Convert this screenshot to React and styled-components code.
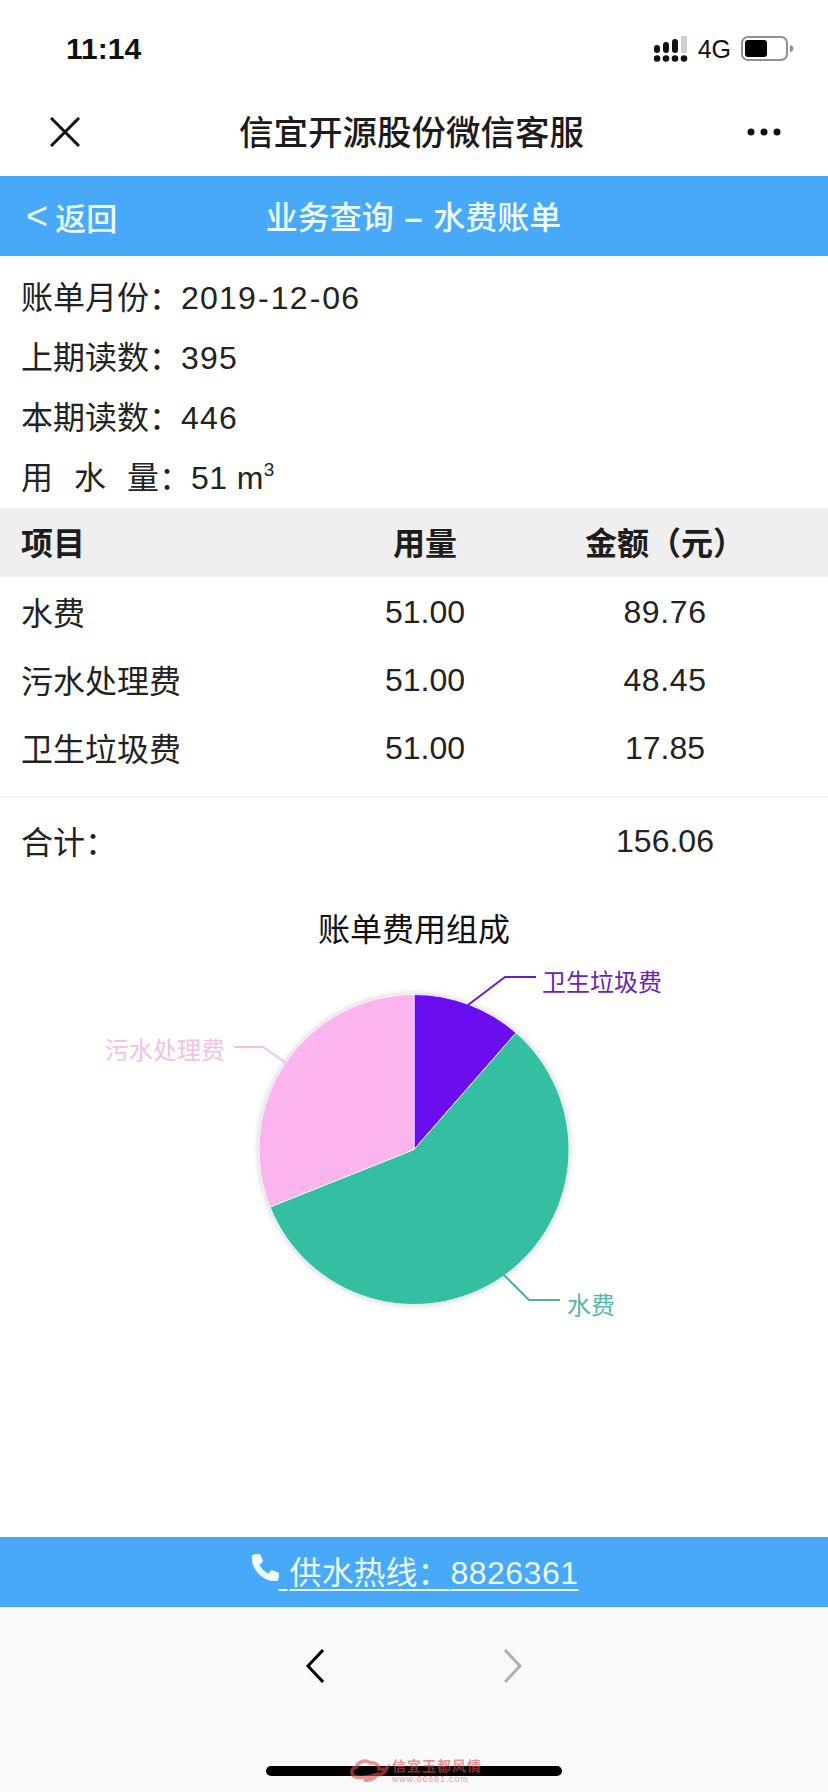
// App.jsx
import React from 'react';
import styled, { createGlobalStyle } from 'styled-components';
import { FaPhoneAlt } from 'react-icons/fa';

const GlobalStyle = createGlobalStyle`
  html, body {
    margin: 0;
    padding: 0;
    background: #fff;
  }
  body {
    font-family: 'Liberation Sans', 'Noto Sans CJK SC', sans-serif;
    color: #222;
  }
`;

const Page = styled.div`
  width: 828px;
  height: 1792px;
  display: flex;
  flex-direction: column;
  background: #fff;
  overflow: hidden;
`;

const StatusBar = styled.div`
  height: 88px;
  display: flex;
  align-items: center;
  justify-content: space-between;
  padding: 22px 34px 12px 66px;
  box-sizing: border-box;
`;

const Clock = styled.div`
  font-size: 30px;
  font-weight: 700;
  color: #111;
`;

const StatusRight = styled.div`
  display: flex;
  align-items: center;
  gap: 10px;
`;

const NetworkLabel = styled.span`
  font-size: 25px;
  color: #111;
`;

const NavBar = styled.div`
  height: 88px;
  display: flex;
  align-items: center;
  justify-content: space-between;
  padding: 0 47px 0 50px;
`;

const NavTitle = styled.div`
  font-size: 34.5px;
  font-weight: 500;
  color: #1c1c1c;
  margin: -4px 0 0 -4px;
`;

const BlueBar = styled.div`
  height: ${(p) => p.$height}px;
  flex-shrink: 0;
  background: #47a9f7;
  color: #ecfbff;
  font-size: 32px;
  display: flex;
  align-items: center;
  justify-content: center;
`;

const Header = styled(BlueBar)`
  position: relative;
`;

const BackLink = styled.div`
  position: absolute;
  left: 26px;
  top: 0;
  height: 100%;
  display: flex;
  align-items: center;
  gap: 7px;
  font-size: 31px;
  font-weight: 500;
`;

const BackArrow = styled.span`
  font-size: 38px;
  line-height: 1;
`;

const HeaderTitle = styled.div`
  font-weight: 500;
  word-spacing: 2px;
  margin: -2px 0 0 -1px;
`;

const Dash = styled.span`
  font-weight: 700;
`;

const InfoList = styled.div`
  padding: 12px 21px 0;
`;

const InfoRow = styled.div`
  height: 60px;
  line-height: 60px;
  font-size: 32px;
  white-space: pre;
`;

const InfoValue = styled.span`
  letter-spacing: ${(p) => p.$spacing}px;
`;

const Hyphen = styled.span`
  letter-spacing: 0;
  margin: 0 2px 0 1px;
`;

const Sup = styled.sup`
  font-size: 19px;
  line-height: 0;
  vertical-align: 13px;
`;

const SpacedChar = styled.span`
  margin-right: 21px;
`;

const TableRow = styled.div`
  display: grid;
  grid-template-columns: 284px 240px 240px;
  align-items: center;
  height: ${(p) => p.$height}px;
  padding: 0 21px;
  font-size: 32px;
`;

const TableHead = styled(TableRow)`
  background: #efefef;
  font-weight: 700;
  color: #1d1d1d;
  padding-bottom: 4px;
  box-sizing: border-box;
`;

const TableBody = styled.div`
  padding-bottom: 15px;
  border-bottom: 2px solid #f3f3f3;
`;

const Cell = styled.div`
  text-align: center;
`;

const NumCell = styled(Cell)`
  padding-top: 3px;
  letter-spacing: ${(p) => p.$spacing || 0}px;
`;

const ChartSection = styled.div`
  flex: 1;
  display: flex;
  flex-direction: column;
`;

const ChartTitle = styled.div`
  height: 48px;
  line-height: 48px;
  margin-top: 24px;
  text-align: center;
  font-size: 32px;
  color: #111;
`;

const PieLabel = styled.text`
  font-size: 24px;
  font-family: 'Liberation Sans', 'Noto Sans CJK SC', sans-serif;
`;

const PieGroup = styled.g`
  filter: drop-shadow(0 0 3px rgba(0, 0, 0, 0.22));
`;

const HotlineLink = styled.div`
  display: flex;
  align-items: center;
  white-space: pre;
  margin: -4px 0 0 2px;
  svg {
    margin-top: -6px;
    stroke: currentColor;
    stroke-width: 18px;
  }
`;

const HotlineText = styled.span`
  text-decoration: underline;
  text-decoration-thickness: 2px;
  text-underline-offset: 5px;
`;

const HotlineLead = styled.span`
  margin-left: 2px;
`;

const HotlineNumber = styled.span`
  margin-left: 1px;
  letter-spacing: 0.5px;
`;

const Toolbar = styled.div`
  flex: 1;
  position: relative;
  background: #f9f9fb;
  display: flex;
  flex-direction: column;
  align-items: center;
`;

const ToolbarButtons = styled.div`
  width: 216px;
  margin-top: 42px;
  display: flex;
  justify-content: space-between;
`;

const HomeBar = styled.div`
  position: absolute;
  left: 266px;
  bottom: 16px;
  width: 296px;
  height: 10px;
  border-radius: 5px;
  background: #000;
`;

const Watermark = styled.div`
  position: absolute;
  left: 350px;
  bottom: 8px;
  display: flex;
  align-items: center;
  gap: 2px;
  color: rgba(222, 80, 80, 0.6);
`;

const WatermarkText = styled.div`
  display: flex;
  flex-direction: column;
  font-size: 9px;
  line-height: 10px;
  letter-spacing: 0.8px;
`;

const WatermarkName = styled.span`
  font-family: 'Liberation Serif', 'Noto Sans CJK SC', serif;
  font-size: 14px;
  line-height: 15px;
  letter-spacing: 1px;
  font-weight: 700;
`;

const rows = [
  { name: '水费', usage: '51.00', amount: '89.76', spacing: 0.6 },
  { name: '污水处理费', usage: '51.00', amount: '48.45', spacing: 0.6 },
  { name: '卫生垃圾费', usage: '51.00', amount: '17.85', spacing: 0 },
];

// 饼图从 12 点方向顺时针画
const slices = [
  {
    name: '卫生垃圾费',
    value: 17.85,
    fill: '#6a0ef0',
    line: '468,51 505,23 536,23',
    lineColor: '#6a1bc4',
    textColor: '#6c22b4',
    x: 542,
    y: 37,
  },
  {
    name: '水费',
    value: 89.76,
    fill: '#34bfa3',
    line: '504,321 529,346 560,346',
    lineColor: '#4fae9c',
    textColor: '#55b8a5',
    x: 567,
    y: 360,
  },
  {
    name: '污水处理费',
    value: 48.45,
    fill: '#fbb4ee',
    line: '286,109 263,93 234,93',
    lineColor: '#f3bfe9',
    textColor: '#f2bfe9',
    x: 225,
    y: 105,
    anchor: 'end',
  },
];

const CX = 414;
const CY = 195.5;
const R = 155;

const pointAt = (angle) => [
  CX + R * Math.sin(angle),
  CY - R * Math.cos(angle),
];

const PieChart = () => {
  const total = slices.reduce((sum, s) => sum + s.value, 0);
  let start = 0;
  const paths = slices.map((s) => {
    const sweep = (s.value / total) * Math.PI * 2;
    const [x1, y1] = pointAt(start);
    const [x2, y2] = pointAt(start + sweep);
    const large = sweep > Math.PI ? 1 : 0;
    start += sweep;
    return {
      name: s.name,
      fill: s.fill,
      d: `M${CX} ${CY}L${x1} ${y1}A${R} ${R} 0 ${large} 1 ${x2} ${y2}Z`,
    };
  });

  return (
    <svg width="828" height="583" viewBox="0 0 828 583">
      <PieGroup>
        {paths.map((p) => (
          <path key={p.name} d={p.d} fill={p.fill} stroke="#fff" strokeWidth="0.8" />
        ))}
      </PieGroup>
      {slices.map((s) => (
        <g key={s.name}>
          <polyline points={s.line} fill="none" stroke={s.lineColor} strokeWidth="2" />
          <PieLabel x={s.x} y={s.y} fill={s.textColor} textAnchor={s.anchor || 'start'}>
            {s.name}
          </PieLabel>
        </g>
      ))}
    </svg>
  );
};

const SignalIcon = () => (
  <svg width="34" height="27" viewBox="0 0 34 27">
    <g fill="#111">
      <rect x="0" y="9" width="6" height="8" rx="3" />
      <rect x="9" y="6" width="6" height="11" rx="3" />
      <rect x="18" y="3" width="6" height="14" rx="3" />
      <circle cx="3" cy="22.500" r="3.300" />
      <circle cx="12" cy="22.500" r="3.300" />
      <circle cx="21" cy="22.500" r="3.300" />
      <circle cx="30" cy="22.500" r="3.300" />
    </g>
    <rect x="27" y="0" width="6" height="17" rx="1" fill="#cfcfcf" />
  </svg>
);

const BatteryIcon = () => (
  <svg width="53" height="26" viewBox="0 0 53 26">
    <rect x="1" y="1" width="45" height="23" rx="6" fill="none" stroke="#8f8f8f" strokeWidth="2" />
    <rect x="4" y="4" width="22" height="17" rx="3" fill="#000" />
    <path d="M49 9c2.500 .6 3.500 2 3.500 3.500S51.500 15.400 49 16z" fill="#8f8f8f" />
  </svg>
);

const CloseIcon = () => (
  <svg width="30" height="30" viewBox="0 0 30 30">
    <path d="M1 1L29 29M29 1L1 29" stroke="#111" strokeWidth="3" fill="none" />
  </svg>
);

const MoreIcon = () => (
  <svg width="34" height="8" viewBox="0 0 34 8">
    <circle cx="4" cy="4" r="3.500" fill="#111" />
    <circle cx="17" cy="4" r="3.500" fill="#111" />
    <circle cx="30" cy="4" r="3.500" fill="#111" />
  </svg>
);

const Chevron = ({ dir, color }) => (
  <svg width="18" height="34" viewBox="0 0 18 34">
    <path
      d={dir === 'left' ? 'M17 1L2 17L17 33' : 'M1 1L16 17L1 33'}
      fill="none"
      stroke={color}
      strokeWidth="3"
    />
  </svg>
);

const CloudLogo = () => (
  <svg width="40" height="26" viewBox="0 0 40 26">
    <path
      d="M6 19c-5-1-6-8 0-10 2-5 9-8 14-4 5-1 9 2 9 6 3 0 5 1 8-1-2 5-6 7-10 7-3 4-8 6-13 5 5 0 9-2 11-5-6 2-14 3-19 2z"
      fill="none"
      stroke="rgba(222,80,80,0.6)"
      strokeWidth="3.500"
    />
  </svg>
);

const App = () => (
  <Page>
    <GlobalStyle />
    <StatusBar>
      <Clock>11:14</Clock>
      <StatusRight>
        <SignalIcon />
        <NetworkLabel>4G</NetworkLabel>
        <BatteryIcon />
      </StatusRight>
    </StatusBar>
    <NavBar>
      <CloseIcon />
      <NavTitle>信宜开源股份微信客服</NavTitle>
      <MoreIcon />
    </NavBar>
    <Header $height={80}>
      <BackLink>
        <BackArrow>&lt;</BackArrow>
        <span>返回</span>
      </BackLink>
      <HeaderTitle>业务查询 <Dash>–</Dash> 水费账单</HeaderTitle>
    </Header>
    <InfoList>
      <InfoRow>账单月份：<InfoValue $spacing={1.2}>2019<Hyphen>-</Hyphen>12<Hyphen>-</Hyphen>06</InfoValue></InfoRow>
      <InfoRow>上期读数：<InfoValue $spacing={1.2}>395</InfoValue></InfoRow>
      <InfoRow>本期读数：<InfoValue $spacing={1.2}>446</InfoValue></InfoRow>
      <InfoRow>
        <SpacedChar>用</SpacedChar>
        <SpacedChar>水</SpacedChar>
        量：<InfoValue $spacing={0.4}>51 m<Sup>3</Sup></InfoValue>
      </InfoRow>
    </InfoList>
    <TableHead $height={69}>
      <div>项目</div>
      <Cell>用量</Cell>
      <Cell>金额（元）</Cell>
    </TableHead>
    <TableBody>
      {rows.map((row) => (
        <TableRow key={row.name} $height={68}>
          <div>{row.name}</div>
          <NumCell>{row.usage}</NumCell>
          <NumCell $spacing={row.spacing}>{row.amount}</NumCell>
        </TableRow>
      ))}
    </TableBody>
    <TableRow $height={84}>
      <div>合计：</div>
      <div />
      <NumCell>156.06</NumCell>
    </TableRow>
    <ChartSection>
      <ChartTitle>账单费用组成</ChartTitle>
      <PieChart />
    </ChartSection>
    <BlueBar $height={70}>
      <HotlineLink>
        <FaPhoneAlt size={27} />
        <HotlineText> <HotlineLead>供水热线：</HotlineLead><HotlineNumber>8826361</HotlineNumber></HotlineText>
      </HotlineLink>
    </BlueBar>
    <Toolbar>
      <ToolbarButtons>
        <Chevron dir="left" color="#000" />
        <Chevron dir="right" color="#b0b0b0" />
      </ToolbarButtons>
      <HomeBar />
      <Watermark>
        <CloudLogo />
        <WatermarkText>
          <WatermarkName>信宜玉都风情</WatermarkName>
          <span>www.06681.com</span>
        </WatermarkText>
      </Watermark>
    </Toolbar>
  </Page>
);

export default App;
